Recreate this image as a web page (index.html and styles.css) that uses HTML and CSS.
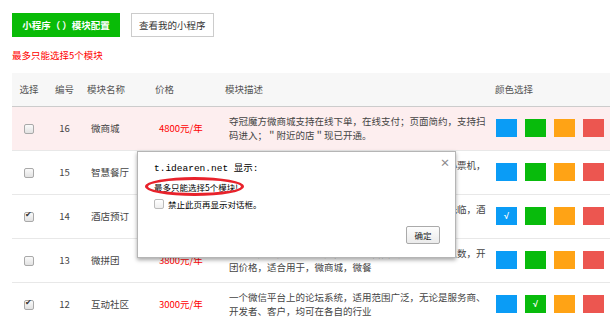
FILE: index.html
```html
<!DOCTYPE html>
<html>
  <head>
    <meta charset="utf-8" />
    <title>小程序模块配置</title>
    <link rel="stylesheet" href="styles.css">
  </head>
  <body>
    <div class="page">
      <div class="toolbar">
        <button class="btn btn-primary">小程序（&nbsp;）模块配置</button>
        <button class="btn">查看我的小程序</button>
      </div>
      <p class="notice">最多只能选择5个模块</p>
      <table class="modules">
        <colgroup>
          <col style="width: 34px" />
          <col style="width: 37px" />
          <col style="width: 68px" />
          <col style="width: 70px" />
          <col style="width: 270px" />
          <col />
        </colgroup>
        <thead>
          <tr>
            <th class="center">选择</th>
            <th class="center">编号</th>
            <th>模块名称</th>
            <th>价格</th>
            <th>模块描述</th>
            <th>颜色选择</th>
          </tr>
        </thead>
        <tbody>
          <tr class="active">
            <td class="center"><input type="checkbox" class="check" /></td>
            <td class="center">16</td>
            <td>微商城</td>
            <td class="price">4800元/年</td>
            <td class="desc">夺冠魔方微商城支持在线下单，在线支付；页面简约，支持扫码进入；＂附近的店＂现已开通。</td>
            <td class="colors">
              <div class="swatches">
                <span class="swatch blue"></span>
                <span class="swatch green"></span>
                <span class="swatch orange"></span>
                <span class="swatch red"></span>
              </div>
            </td>
          </tr>
          <tr>
            <td class="center"><input type="checkbox" class="check" /></td>
            <td class="center">15</td>
            <td>智慧餐厅</td>
            <td class="price">4200元/年</td>
            <td class="desc">智慧餐厅支持扫码点餐，在线支付，自动对接云打印小票机，让点餐更便捷。</td>
            <td class="colors">
              <div class="swatches">
                <span class="swatch blue"></span>
                <span class="swatch green"></span>
                <span class="swatch orange"></span>
                <span class="swatch red"></span>
              </div>
            </td>
          </tr>
          <tr>
            <td class="center"><input type="checkbox" class="check" checked /></td>
            <td class="center">14</td>
            <td>酒店预订</td>
            <td class="price">3600元/年</td>
            <td class="desc">酒店预订支持在线订客房，在线支付，欢迎各位旅客光临，酒店服务周到。</td>
            <td class="colors">
              <div class="swatches">
                <span class="swatch blue selected">√</span>
                <span class="swatch green"></span>
                <span class="swatch orange"></span>
                <span class="swatch red"></span>
              </div>
            </td>
          </tr>
          <tr>
            <td class="center"><input type="checkbox" class="check" /></td>
            <td class="center">13</td>
            <td>微拼团</td>
            <td class="price">3800元/年</td>
            <td class="desc">微拼团支持多人拼团购买，商家可自由设置参与拼团人数，开团价格，适合用于，微商城，微餐</td>
            <td class="colors">
              <div class="swatches">
                <span class="swatch blue"></span>
                <span class="swatch green"></span>
                <span class="swatch orange"></span>
                <span class="swatch red"></span>
              </div>
            </td>
          </tr>
          <tr>
            <td class="center"><input type="checkbox" class="check" checked /></td>
            <td class="center">12</td>
            <td>互动社区</td>
            <td class="price">3000元/年</td>
            <td class="desc">一个微信平台上的论坛系统，适用范围广泛，无论是服务商、开发者、客户，均可在各自的行业</td>
            <td class="colors">
              <div class="swatches">
                <span class="swatch blue"></span>
                <span class="swatch green selected">√</span>
                <span class="swatch orange"></span>
                <span class="swatch red"></span>
              </div>
            </td>
          </tr>
        </tbody>
      </table>
    </div>

    <!-- browser alert over the page -->
    <div class="dialog">
      <span class="dialog-close">×</span>
      <div class="dialog-title">t.idearen.net 显示:</div>
      <div class="dialog-message">最多只能选择5个模块!</div>
      <span class="circle"></span>
      <label class="dialog-option">
        <input type="checkbox" class="check" />
        <span>禁止此页再显示对话框。</span>
      </label>
      <div class="dialog-actions">
        <button class="dialog-ok">确定</button>
      </div>
    </div>
  </body>
</html>
```

FILE: styles.css
```css
html,
body {
  margin: 0;
  height: 100%;
}
*,
*:before,
*:after {
  box-sizing: border-box;
}
body {
  position: relative;
  overflow: hidden;
  background: #fff;
  color: #333;
  font-family: "Noto Sans CJK SC", "Noto Sans", sans-serif;
  font-size: 9.5px;
}
.page {
  padding: 13px 0 0 12px;
}
.toolbar {
  display: flex;
  gap: 11px;
}
.btn {
  height: 24px;
  padding: 0 7px;
  border: 1px solid #ccc;
  background: #fff;
  color: #333;
  font: inherit;
}
.btn-primary {
  width: 108px;
  padding: 0;
  background: #09bb07;
  border-color: #09bb07;
  color: #fff;
  font-weight: bold;
}
.notice {
  margin: 12px 0 0;
  line-height: 12px;
  color: #f00;
}
.modules {
  margin-top: 12px;
  width: 610px;
  border-collapse: collapse;
  table-layout: fixed;
}
.modules th {
  height: 33px;
  padding: 0 0 0 4px;
  background: #f7f7f7;
  border-bottom: 1px solid #ccc;
  color: #555;
  font-weight: normal;
  text-align: left;
}
.modules td {
  height: 44px;
  padding: 0 0 0 8px;
  border-bottom: 1px solid #e8e8e8;
  color: #444;
}
.modules .center {
  padding: 0;
  text-align: center;
}
.modules tr.active td {
  background: #fdeeef;
}
.modules td.price {
  color: #f00;
}
.modules td.desc {
  padding-right: 4px;
  line-height: 14px;
}
.modules td.colors {
  padding-left: 5px;
}
.swatches {
  display: flex;
  gap: 8px;
}
.swatch {
  width: 21px;
  height: 18px;
  display: flex;
  align-items: center;
  justify-content: center;
  color: #fff;
  font-family: "Liberation Sans", sans-serif;
  font-size: 9px;
  font-weight: bold;
}
.blue {
  background: #0a9cf6;
}
.green {
  background: #08bb0c;
}
.orange {
  background: #ffa315;
}
.red {
  background: #ec5650;
}
.check {
  appearance: none;
  margin: 0;
  width: 10px;
  height: 10px;
  border: 1px solid #a9a9a9;
  border-radius: 2px;
  background: linear-gradient(#fafafa, #e2e2e2);
  vertical-align: middle;
  position: relative;
}
.check:checked:after {
  content: "✔";
  position: absolute;
  left: 0;
  top: -3px;
  font-size: 8px;
  color: #333;
}
.dialog {
  position: absolute;
  left: 137px;
  top: 151px;
  width: 319px;
  height: 107px;
  padding: 10px 15px 0 16px;
  background: #fff;
  border: 1px solid #b5b5b5;
  box-shadow: 0 2px 4px rgba(0, 0, 0, 0.35);
  font-size: 8.5px;
  color: #000;
}
.dialog-close {
  position: absolute;
  right: 5px;
  top: 3px;
  color: #888;
  font-size: 10px;
  font-weight: bold;
}
.dialog-title {
  font-family: "Liberation Mono", "Noto Sans CJK SC", monospace;
  font-size: 9.5px;
  line-height: 14px;
}
.dialog-message {
  margin-top: 4px;
  line-height: 14px;
}
.circle {
  position: absolute;
  left: 7px;
  top: 25px;
  width: 99px;
  height: 19px;
  border: 3px solid #e8222b;
  border-radius: 50%;
}
.dialog-option {
  margin-top: 3px;
  display: flex;
  align-items: center;
  gap: 4px;
  line-height: 14px;
}
.dialog-option .check {
  background: linear-gradient(#fff, #eee);
  border-color: #bbb;
}
.dialog-actions {
  margin-top: 15px;
  display: flex;
  justify-content: flex-end;
}
.dialog-ok {
  width: 34px;
  height: 18px;
  padding: 0;
  border: 1px solid #aaa;
  border-radius: 2px;
  background: linear-gradient(#fdfdfd, #ebebeb);
  font: inherit;
  color: #222;
}
```
